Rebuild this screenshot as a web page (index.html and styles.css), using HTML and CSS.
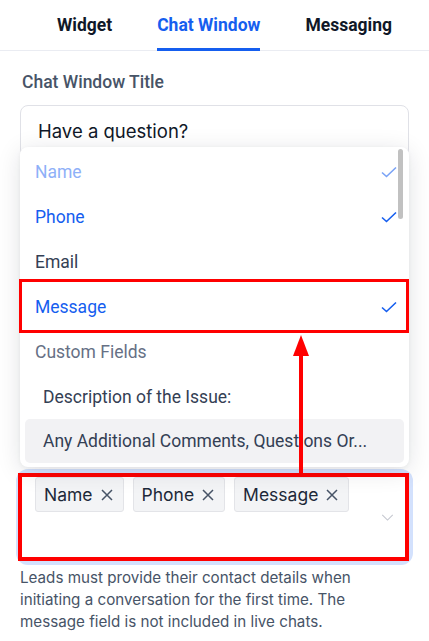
FILE: index.html
```html
<!DOCTYPE html>
<html lang="en">
<head>
<meta charset="utf-8" />
<title>Chat Window settings</title>
<link rel="stylesheet" href="styles.css">
</head>
<body>
  <nav class="tabs">
    <a class="tab">Widget</a>
    <a class="tab active">Chat Window</a>
    <a class="tab">Messaging</a>
  </nav>

  <section class="form">
    <label class="field-label">Chat Window Title</label>
    <div class="input">Have a question?</div>

    <div class="select-wrap">
      <ul class="menu">
        <li class="option disabled">Name <svg class="check" viewBox="0 0 16 12"><path d="M1 6.5 L5.5 10.5 L15 1.5" /></svg></li>
        <li class="option selected">Phone <svg class="check" viewBox="0 0 16 12"><path d="M1 6.5 L5.5 10.5 L15 1.5" /></svg></li>
        <li class="option">Email</li>
        <li class="option selected marked">Message <svg class="check" viewBox="0 0 16 12"><path d="M1 6.5 L5.5 10.5 L15 1.5" /></svg></li>
        <li class="group">Custom Fields</li>
        <li class="option sub">Description of the Issue:</li>
        <li class="option sub hover">Any Additional Comments, Questions Or...</li>
      </ul>
      <div class="scroll-thumb"></div>

      <div class="multi">
        <span class="tag">Name <svg class="x" viewBox="0 0 12 12"><path d="M1 1 L11 11 M11 1 L1 11" /></svg></span>
        <span class="tag">Phone <svg class="x" viewBox="0 0 12 12"><path d="M1 1 L11 11 M11 1 L1 11" /></svg></span>
        <span class="tag">Message <svg class="x" viewBox="0 0 12 12"><path d="M1 1 L11 11 M11 1 L1 11" /></svg></span>
        <svg class="chevron" viewBox="0 0 14 8"><path d="M1 1 L7 7 L13 1" /></svg>
      </div>

      <svg class="arrow" width="16" height="141" viewBox="0 0 16 141">
        <line x1="8" y1="20" x2="8" y2="141" />
        <polygon points="8,3 0,24 16,24" />
      </svg>
    </div>

    <p class="help">Leads must provide their contact details when initiating a conversation for the first time. The message field is not included in live chats.</p>
  </section>
</body>
</html>
```

FILE: styles.css
```css
body {
    margin: 0;
    background: #fff;
    font-family: Roboto, sans-serif;
    color: #101828;
}

.tabs {
    display: flex;
    padding-left: 57px;
    gap: 45px;
    height: 50px;
    border-bottom: 1px solid #eaecf2;
}

.tab {
    display: flex;
    align-items: center;
    font-size: 17.5px;
    font-weight: 700;
    color: #101828;
    border-bottom: 3px solid transparent;
    margin-bottom: -1px;
    padding-top: 2px;
}

.tab.active {
    color: #155eef;
    border-bottom-color: #155eef;
}

.form {
    padding: 18px 20px 0;
}

.field-label {
    display: block;
    padding-left: 2px;
    font-size: 17.5px;
    font-weight: 500;
    line-height: 26px;
    color: #475467;
    margin-bottom: 10px;
}

.input {
    height: 50px;
    border: 1px solid #e0e1e7;
    border-radius: 8px;
    padding: 0 17px;
    font-family: Inter, sans-serif;
    font-size: 18.5px;
    line-height: 50px;
    color: #101828;
}

.select-wrap {
    position: relative;
    margin-top: 316px;
}

.menu {
    position: absolute;
    left: 0;
    right: 0;
    bottom: calc(100% + 6px);
    margin: 0;
    padding: 2px 0 4px;
    list-style: none;
    background: #fff;
    border-radius: 8px;
    box-shadow: 0 4px 24px rgba(16, 24, 40, 0.12), 0 1px 4px rgba(16, 24, 40, 0.05);
    z-index: 2;
}

.option,
.group {
    position: relative;
    display: flex;
    align-items: center;
    justify-content: space-between;
    height: 45px;
    padding: 0 12px 0 15px;
    font-size: 17.5px;
    color: #344054;
}

.group {
    color: #667085;
}

.option.selected {
    color: #155eef;
}

.option.disabled {
    color: #8eb0f8;
}

.option.sub {
    padding-left: 23px;
}

.option.hover {
    margin: 0 5px;
    padding-left: 18px;
    height: 44px;
    background: #f2f2f4;
    border-radius: 5px;
}

.check {
    width: 16px;
    height: 12px;
    fill: none;
    stroke: currentColor;
    stroke-width: 1.6;
}

.option.disabled .check {
    stroke: #7aa3f6;
}

/* red annotation around the picked option */
.marked::after {
    content: "";
    position: absolute;
    left: -1px;
    right: 0;
    top: -5px;
    bottom: -4px;
    border: 3px solid #f00;
}

.scroll-thumb {
    position: absolute;
    left: 378px;
    bottom: calc(100% + 254px);
    width: 5px;
    height: 70px;
    border-radius: 3px;
    background: #c1c1c1;
    z-index: 3;
}

.multi {
    position: relative;
    display: flex;
    flex-wrap: wrap;
    align-content: flex-start;
    gap: 9px;
    min-height: 88px;
    box-sizing: border-box;
    padding: 4px 15px;
    background: #fff;
    border-radius: 8px;
    box-shadow: 0 0 0 4px #d3e1fd;
    font-family: Inter, sans-serif;
}

/* red annotation around the field */
.multi::after {
    content: "";
    position: absolute;
    inset: 0 0 0 -2px;
    border: 4px solid #f00;
}

.tag {
    display: flex;
    align-items: center;
    gap: 8px;
    height: 35px;
    box-sizing: border-box;
    padding: 0 10px 0 8px;
    background: #f3f4f6;
    border: 1px solid #e3e4e8;
    border-radius: 3px;
    font-size: 17.5px;
    color: #1d2939;
}

.x {
    width: 12px;
    height: 12px;
    fill: none;
    stroke: #475467;
    stroke-width: 1.5;
}

.chevron {
    position: absolute;
    right: 15px;
    top: 41px;
    width: 13px;
    height: 7px;
    fill: none;
    stroke: #c4c7cf;
    stroke-width: 1.2;
}

.arrow {
    position: absolute;
    left: 273px;
    top: -141px;
    z-index: 4;
}

.arrow line {
    stroke: #f00;
    stroke-width: 4;
}

.arrow polygon {
    fill: #f00;
}

.help {
    margin: 6px 0 0;
    font-family: Inter, sans-serif;
    font-size: 15.2px;
    line-height: 22px;
    color: #475467;
}
```
